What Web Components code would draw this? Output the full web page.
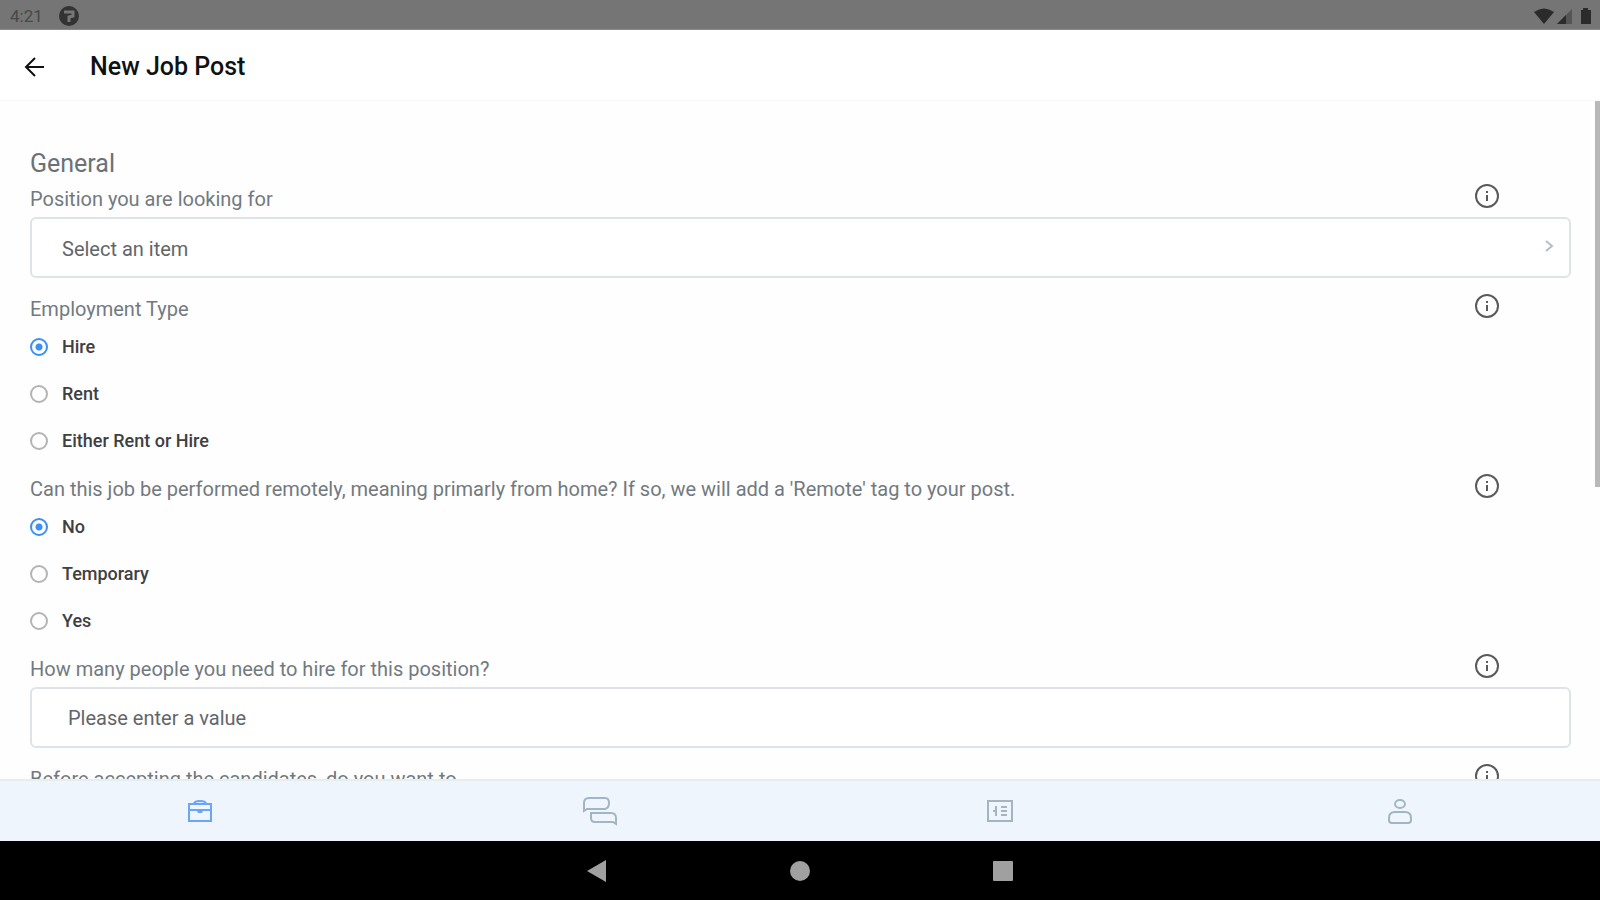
<!DOCTYPE html>
<html lang="en">
<head>
<meta charset="utf-8">
<meta name="viewport" content="width=device-width, initial-scale=1">
<title>New Job Post</title>
<style>
  body {
    margin: 0;
    height: 100vh;
    display: flex;
    flex-direction: column;
    overflow: hidden;
    background: #fefefe;
    color: #727a80;
    font-family: Roboto, "Liberation Sans", sans-serif;
    --line: #dfe3e8;
    --accent: #3b8ff5;
  }
</style>
</head>
<body>
<status-bar time="4:21"></status-bar>
<app-header>New Job Post</app-header>
<scroll-view>
  <form-section heading="General">
    <select-field placeholder="Select an item">Position you are looking for</select-field>
    <radio-field options="Hire|Rent|Either Rent or Hire">Employment Type</radio-field>
    <radio-field options="No|Temporary|Yes">Can this job be performed remotely, meaning primarly from home? If so, we will add a 'Remote' tag to your post.</radio-field>
    <text-field placeholder="Please enter a value">How many people you need to hire for this position?</text-field>
    <text-field placeholder="">Before accepting the candidates, do you want to</text-field>
  </form-section>
</scroll-view>
<tab-bar></tab-bar>
<system-nav></system-nav>

<script>
class StatusBar extends HTMLElement {
    connectedCallback() {
        this.attachShadow({ mode: 'open' });
        this.shadowRoot.innerHTML = `
      <style>
        :host {
          display: flex;
          align-items: center;
          flex: none;
          box-sizing: border-box;
          height: 30px;
          padding: 2px 6px 0 10px;
          background: #757575;
          border-bottom: 1px solid #8a8a8a;
          color: #484848;
          font-size: 17px;
          line-height: 20px;
        }

        .app {
          margin-left: 16px;
        }

        .system {
          display: flex;
          align-items: center;
          gap: 3px;
          margin-left: auto;
        }
      </style>

      <span>${this.getAttribute('time')}</span>
      <svg class="app" width="20" height="20" viewBox="0 0 20 20">
        <circle cx="10" cy="10" r="10" fill="#333"/>
        <path d="M5 6h9v4l-4 1v5" fill="none" stroke="#777" stroke-width="3"/>
      </svg>
      <div class="system">
        <svg width="20" height="18" viewBox="0 0 20 18"><path d="M0 5Q10-2 20 5L10 17Z" fill="#2b2b2b"/></svg>
        <svg width="16" height="18" viewBox="0 0 16 18">
          <path d="M0 17 15 2v15Z" fill="#555"/>
          <path d="M0 17 9 8v9Z" fill="#2b2b2b"/>
        </svg>
        <svg width="18" height="18" viewBox="0 0 18 18"><path d="M7 1h5v2h3v14H5V3h2Z" fill="#2b2b2b"/></svg>
      </div>
    `;
    }
}

class AppHeader extends HTMLElement {
    connectedCallback() {
        this.attachShadow({ mode: 'open' });
        this.shadowRoot.innerHTML = `
      <style>
        :host {
          display: flex;
          align-items: center;
          flex: none;
          box-sizing: border-box;
          height: 71px;
          padding: 4px 22px 0;
          gap: 42px;
          background: #fff;
          border-bottom: 1px solid #f7f7f7;
        }

        button {
          display: flex;
          padding: 0;
          border: 0;
          background: none;
          color: #111;
        }

        h1 {
          margin: 0;
          color: #111;
          font-size: 25px;
          font-weight: 500;
          line-height: 32px;
        }
      </style>

      <button type="button" aria-label="Back">
        <svg width="26" height="26" viewBox="0 0 26 26" fill="none" stroke="currentColor" stroke-width="2">
          <path d="M13 4 4 13l9 9M4 13h18"/>
        </svg>
      </button>
      <h1><slot></slot></h1>
    `;
    }
}

class ScrollView extends HTMLElement {
    connectedCallback() {
        this.attachShadow({ mode: 'open' });
        this.shadowRoot.innerHTML = `
      <style>
        :host {
          display: block;
          position: relative;
          flex: 1;
          min-height: 0;
          overflow: hidden;
        }

        /* overlay scroll indicator */
        .thumb {
          position: absolute;
          top: 0;
          right: 0;
          width: 5px;
          height: 57%;
          background: #b8b8b8;
        }
      </style>

      <slot></slot>
      <div class="thumb"></div>
    `;
    }
}

class FormSection extends HTMLElement {
    connectedCallback() {
        this.attachShadow({ mode: 'open' });
        this.shadowRoot.innerHTML = `
      <style>
        :host {
          display: block;
          padding: 49px 29px 0 30px;
        }

        h2 {
          margin: 0 0 5px;
          color: #6a7278;
          font-size: 25px;
          font-weight: 400;
          line-height: 28px;
        }
      </style>

      <h2>${this.getAttribute('heading')}</h2>
      <slot></slot>
    `;
    }
}

class InfoButton extends HTMLElement {
    connectedCallback() {
        this.attachShadow({ mode: 'open' });
        this.shadowRoot.innerHTML = `
      <style>
        :host {
          display: block;
          flex: none;
        }

        button {
          display: block;
          padding: 0;
          border: 0;
          background: none;
          color: #5a5a5a;
        }

        svg {
          display: block;
        }
      </style>

      <button type="button" aria-label="More information">
        <svg width="26" height="26" viewBox="0 0 26 26" fill="none" stroke="currentColor" stroke-width="2">
          <circle cx="13" cy="13" r="11"/>
          <path d="M13 12v6M13 8v2"/>
        </svg>
      </button>
    `;
    }
}

// Shared look of all form fields
const fieldStyles = `
        :host {
          display: block;
          margin-bottom: 15px;
        }

        .head {
          display: flex;
          align-items: flex-start;
          justify-content: space-between;
          height: 34px;
          padding-right: 71px;
        }

        .caption {
          font-size: 20px;
          line-height: 32px;
        }

        .control {
          box-sizing: border-box;
          width: 100%;
          height: 61px;
          margin: 0;
          border: 2px solid var(--line);
          border-radius: 6px;
          background: #fff;
          color: #62666a;
          font: 400 20px Roboto, "Liberation Sans", sans-serif;
          outline: 0;
        }
`;

class SelectField extends HTMLElement {
    connectedCallback() {
        this.attachShadow({ mode: 'open' });
        this.shadowRoot.innerHTML = `
      <style>
        ${fieldStyles}
        .box {
          display: grid;
          align-items: center;
        }

        .box > * {
          grid-area: 1 / 1;
        }

        select {
          appearance: none;
          padding: 2px 30px 0;
        }

        svg {
          justify-self: end;
          margin: 0 16px 4px 0;
          pointer-events: none;
        }
      </style>

      <div class="head">
        <label class="caption" for="control"><slot></slot></label>
        <info-button></info-button>
      </div>
      <div class="box">
        <select class="control" id="control"><option>${this.getAttribute('placeholder')}</option></select>
        <svg width="12" height="14" viewBox="0 0 12 14" fill="none" stroke="#b4bcc6" stroke-width="2">
          <path d="m3 2 6 5-6 5"/>
        </svg>
      </div>
    `;
    }
}

class TextField extends HTMLElement {
    connectedCallback() {
        this.attachShadow({ mode: 'open' });
        this.shadowRoot.innerHTML = `
      <style>
        ${fieldStyles}
        input {
          padding: 0 36px;
        }

        input::placeholder {
          color: #62666a;
          opacity: 1;
        }
      </style>

      <div class="head">
        <label class="caption" for="control"><slot></slot></label>
        <info-button></info-button>
      </div>
      <input class="control" id="control" type="text" placeholder="${this.getAttribute('placeholder')}">
    `;
    }
}

class RadioField extends HTMLElement {
    connectedCallback() {
        const options = this.getAttribute('options').split('|');
        this.attachShadow({ mode: 'open' });
        this.shadowRoot.innerHTML = `
      <style>
        ${fieldStyles}
        .options {
          display: flex;
          flex-direction: column;
          align-items: flex-start;
          gap: 21px;
          padding: 7px 0 4px;
        }

        .options label {
          display: flex;
          align-items: center;
          gap: 14px;
          color: #3e4042;
          font-size: 18px;
          font-weight: 500;
          line-height: 26px;
        }

        input {
          appearance: none;
          box-sizing: border-box;
          width: 18px;
          height: 18px;
          margin: 0;
          border: 2px solid #b4b4b4;
          border-radius: 50%;
        }

        input:checked {
          border-color: var(--accent);
          background: radial-gradient(circle, var(--accent) 3px, transparent 4px);
        }
      </style>

      <div class="head">
        <span class="caption" id="caption"><slot></slot></span>
        <info-button></info-button>
      </div>
      <div class="options" role="radiogroup" aria-labelledby="caption">
        ${options.map((text, i) => `<label><input type="radio" name="option"${i === 0 ? ' checked' : ''}>${text}</label>`).join('')}
      </div>
    `;
    }
}

class TabBar extends HTMLElement {
    connectedCallback() {
        this.attachShadow({ mode: 'open' });
        this.shadowRoot.innerHTML = `
      <style>
        :host {
          display: block;
          flex: none;
          background: #eff5fd;
          border-top: 2px solid #e6edef;
        }

        nav {
          display: grid;
          grid-template-columns: repeat(4, 1fr);
          height: 60px;
        }

        a {
          display: flex;
          align-items: center;
          justify-content: center;
          color: #a3b4c2;
        }

        a.active {
          color: #6ba4f8;
        }

        svg {
          fill: none;
          stroke: currentColor;
          stroke-width: 2;
        }
      </style>

      <nav>
        <a class="active" href="#jobs" aria-label="Jobs">
          <svg width="26" height="24" viewBox="0 0 26 24">
            <path d="M2 5h22v17H2ZM7 5q0-3 6-3t6 3M2 11h22"/>
            <path d="M9 10h8l-2 4h-4Z" fill="currentColor" stroke="none"/>
          </svg>
        </a>
        <a href="#messages" aria-label="Messages">
          <svg width="36" height="30" viewBox="0 0 36 30">
            <path d="M2 15V7q0-5 5-5h16q4 0 4 5t-4 6H5Z"/>
            <path d="M9 17h20q5 0 5 5v6l-3-2H13q-4 0-4-4Z"/>
          </svg>
        </a>
        <a href="#card" aria-label="Card">
          <svg width="26" height="24" viewBox="0 0 26 24">
            <path d="M1 2h24v20H1Z"/>
            <path d="M9 7v10M6 12h4M14 8h6M14 12h6M14 16h6"/>
          </svg>
        </a>
        <a href="#profile" aria-label="Profile">
          <svg width="26" height="28" viewBox="0 0 26 28">
            <ellipse cx="13" cy="7" rx="5" ry="4"/>
            <path d="M8 15h10q6 0 6 6v2q0 3-3 3H5q-3 0-3-3v-2q0-6 6-6Z"/>
          </svg>
        </a>
      </nav>
    `;
    }
}

class SystemNav extends HTMLElement {
    connectedCallback() {
        this.attachShadow({ mode: 'open' });
        this.shadowRoot.innerHTML = `
      <style>
        :host {
          display: flex;
          justify-content: center;
          flex: none;
          height: 59px;
          background: #000;
        }

        button {
          display: flex;
          align-items: center;
          justify-content: center;
          width: 203px;
          padding: 0;
          border: 0;
          background: none;
        }

        svg {
          fill: #a0a0a0;
        }
      </style>

      <button type="button" aria-label="Back"><svg width="22" height="22" viewBox="0 0 22 22"><path d="M1 11 20 0v22Z"/></svg></button>
      <button type="button" aria-label="Home"><svg width="20" height="20" viewBox="0 0 20 20"><circle cx="10" cy="10" r="10"/></svg></button>
      <button type="button" aria-label="Recent apps"><svg width="20" height="20" viewBox="0 0 20 20"><rect width="20" height="20" rx="1"/></svg></button>
    `;
    }
}

customElements.define('status-bar', StatusBar);
customElements.define('app-header', AppHeader);
customElements.define('scroll-view', ScrollView);
customElements.define('form-section', FormSection);
customElements.define('info-button', InfoButton);
customElements.define('select-field', SelectField);
customElements.define('text-field', TextField);
customElements.define('radio-field', RadioField);
customElements.define('tab-bar', TabBar);
customElements.define('system-nav', SystemNav);
</script>
</body>
</html>
